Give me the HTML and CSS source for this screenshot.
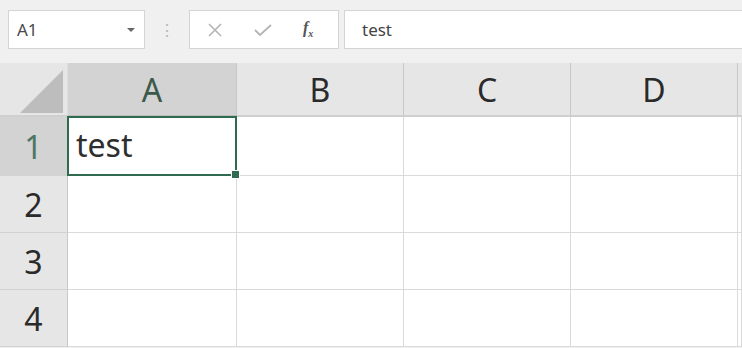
FILE: index.html
```html
<!doctype html>
<html>
<head>
    <title>Hoja</title>
    <meta charset="utf-8">
    <link rel="stylesheet" href="styles.css">
</head>
<body>
    <!-- Barra de fórmulas -->
    <div class="barra">
        <div class="nombre">
            <span class="texto">A1</span>
            <span class="flecha"></span>
        </div>
        <div class="puntos">⋮</div>
        <div class="iconos">
            <svg width="16" height="16" viewBox="0 0 16 16" class="icono">
                <path d="M2 2 L14 14 M14 2 L2 14" stroke="#b4b4b4" stroke-width="1.6" fill="none"/>
            </svg>
            <svg width="20" height="16" viewBox="0 0 20 16" class="icono">
                <path d="M2 8 L7 13 L18 3" stroke="#b4b4b4" stroke-width="1.8" fill="none"/>
            </svg>
            <span class="fx"><i>f</i><sub>x</sub></span>
        </div>
        <div class="formula">test</div>
    </div>

    <!-- Cuadrícula -->
    <div class="hoja">
        <div class="esquina"><span class="triangulo"></span></div>
        <div class="col activa">A</div>
        <div class="col">B</div>
        <div class="col">C</div>
        <div class="col">D</div>
        <div class="col resto"></div>

        <div class="fila activa">1</div>
        <div class="celda seleccion">test<span class="asa"></span></div>
        <div class="celda"></div>
        <div class="celda"></div>
        <div class="celda"></div>
        <div class="celda resto"></div>

        <div class="fila">2</div>
        <div class="celda"></div>
        <div class="celda"></div>
        <div class="celda"></div>
        <div class="celda"></div>
        <div class="celda resto"></div>

        <div class="fila">3</div>
        <div class="celda"></div>
        <div class="celda"></div>
        <div class="celda"></div>
        <div class="celda"></div>
        <div class="celda resto"></div>

        <div class="fila">4</div>
        <div class="celda"></div>
        <div class="celda"></div>
        <div class="celda"></div>
        <div class="celda"></div>
        <div class="celda resto"></div>
    </div>
</body>
</html>
```

FILE: styles.css
```css
body {
    margin: 0;
    background-color: #f0f0f0;
    font-family: "Noto Sans", "Open Sans", sans-serif;
    overflow: hidden;
}
.barra {
    display: flex;
    align-items: center;
    padding: 10px 0 0 8px;
    height: 39px;
    margin-bottom: 14px;
}
.nombre {
    box-sizing: border-box;
    width: 137px;
    height: 39px;
    background-color: white;
    border: 1px solid #d4d4d4;
    display: flex;
    align-items: center;
    justify-content: space-between;
    padding: 0 9px 0 8px;
    color: #4a4a4a;
    font-size: 17px;
}
.flecha {
    width: 0;
    height: 0;
    border-left: 4px solid transparent;
    border-right: 4px solid transparent;
    border-top: 4px solid #666;
}
.puntos {
    width: 44px;
    text-align: center;
    color: #b8b8b8;
    font-size: 16px;
}
.iconos {
    box-sizing: border-box;
    width: 150px;
    height: 39px;
    background-color: white;
    border: 1px solid #d4d4d4;
    display: flex;
    align-items: center;
    padding-left: 17px;
    gap: 30px;
}
.fx {
    font-family: "Liberation Serif", serif;
    font-size: 16px;
    color: #555;
    font-weight: bold;
}
.fx sub {
    font-size: 10px;
    font-style: italic;
}
.formula {
    box-sizing: border-box;
    flex: 1;
    height: 39px;
    margin-left: 5px;
    background-color: white;
    border: 1px solid #d4d4d4;
    border-right: none;
    display: flex;
    align-items: center;
    padding-left: 17px;
    color: #444;
    font-size: 17px;
}
.hoja {
    display: grid;
    grid-template-columns: 68px 169px 167px 167px 167px 4px;
    grid-template-rows: 54px 59px 57px 57px 57px;
    background-color: white;
}
.esquina {
    background-color: #e6e6e6;
    border-bottom: 2px solid #cfcfcf;
    border-right: 1px solid #dcdcdc;
    position: relative;
}
.triangulo {
    position: absolute;
    left: 20px;
    top: 7px;
    width: 0;
    height: 0;
    border-left: 43px solid transparent;
    border-bottom: 43px solid #bdbdbd;
}
.col {
    background-color: #e6e6e6;
    border-right: 1px solid #c8c8c8;
    border-bottom: 2px solid #cfcfcf;
    display: flex;
    align-items: center;
    justify-content: center;
    font-size: 32px;
    color: #2a2a2a;
}
.col.activa {
    background-color: #d3d3d3;
    color: #3c5a4a;
    border-bottom-color: #bcbcbc;
}
.fila {
    background-color: #e6e6e6;
    border-right: 1px solid #c8c8c8;
    border-bottom: 1px solid #d2d2d2;
    display: flex;
    align-items: center;
    justify-content: center;
    font-size: 32px;
    color: #2a2a2a;
}
.fila.activa {
    background-color: #d3d3d3;
    color: #4f7564;
}
.resto {
    border-right: none;
}
.celda {
    border-right: 1px solid #dadada;
    border-bottom: 1px solid #dadada;
}
.seleccion {
    position: relative;
    box-sizing: border-box;
    border: 2px solid #2f6b4f;
    margin: -1px 0 0 -1px;
    padding: 5px 0 0 7px;
    font-size: 32px;
    line-height: 1.36;
    color: #2e2e2e;
}
.asa {
    position: absolute;
    right: -5px;
    bottom: -5px;
    width: 7px;
    height: 7px;
    background-color: #2f6b4f;
    border: 1px solid white;
}
```
